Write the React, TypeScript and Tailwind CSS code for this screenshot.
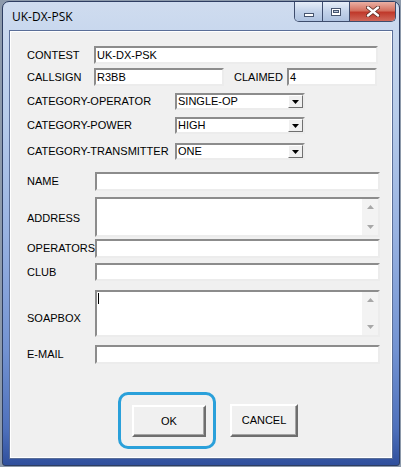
import React from "react";

// sunken classic edit box
const Edit = ({ className, value, cursor, scroll }: { className: string; value?: string; cursor?: boolean; scroll?: boolean }) => (
  <div className={`relative flex bg-white border-2 border-t-[#8c8c8c] border-l-[#8c8c8c] border-r-[#ececec] border-b-[#ececec] ${className}`}>
    <div className="flex-1 pl-[1px] leading-[14px] text-[11px] text-black">
      {value}
      {cursor && <div className="w-[1px] h-[11px] bg-black mt-[1px]" />}
    </div>
    {scroll && (
      <div className="w-[16px] flex flex-col justify-between items-center bg-[#f3f3f3] py-[6px]">
        <svg width="7" height="4" viewBox="0 0 7 4"><path d="M0 4 L3.5 0 L7 4 Z" fill="#a8a8a8" /></svg>
        <svg width="7" height="4" viewBox="0 0 7 4"><path d="M0 0 L3.5 4 L7 0 Z" fill="#a8a8a8" /></svg>
      </div>
    )}
  </div>
);

const Combo = ({ value }: { value: string }) => (
  <div className="flex items-center bg-white w-[130px] h-[17px] border-2 border-t-[#8c8c8c] border-l-[#8c8c8c] border-r-[#ececec] border-b-[#ececec]">
    <div className="flex-1 pl-[1px] text-[11px] leading-[13px]">{value}</div>
    <div className="w-[15px] h-[13px] flex items-center justify-center bg-[#f0f0f0] border border-t-white border-l-white border-r-[#707070] border-b-[#707070]">
      <svg width="7" height="4" viewBox="0 0 7 4"><path d="M0 0 L3.5 4 L7 0 Z" fill="#000" /></svg>
    </div>
  </div>
);

const Label = ({ className, children }: { className: string; children: React.ReactNode }) => (
  <div className={`shrink-0 text-[11px] text-black whitespace-nowrap ${className}`}>{children}</div>
);

const Button = ({ className, children }: { className: string; children: React.ReactNode }) => (
  <div className={`flex items-center justify-center bg-[#f0f0f0] text-[11px] border-2 border-t-white border-l-white border-r-[#6e6e6e] border-b-[#6e6e6e] shadow-[inset_-1px_-1px_0_#a5a5a5] ${className}`}>
    {children}
  </div>
);

export default function App() {
  return (
    <div className="w-[401px] h-[467px] bg-[#8d9aab] pt-[1px] pl-[2px] pr-[1px] font-['Liberation_Sans',Arial,sans-serif] overflow-hidden">
      <div className="w-[398px] h-[465px] flex flex-col rounded-t-[7px] rounded-b-[3px] border border-[#2e3e62] bg-[linear-gradient(180deg,#cfdcef_0%,#b6cbea_25%,#98b2e1_50%,#7393d2_75%,#4f71bc_92%,#2f4f9c_100%)]">
        {/* title bar */}
        <div className="h-[28px] flex justify-between shrink-0">
          <div className="pl-[9px] pt-[8px] text-[12px] text-black font-['Open_Sans',sans-serif] leading-[14px]">UK-DX-PSK</div>
          <div className="flex h-[20px] mr-[3px] border border-t-0 border-[#3e4d6d] rounded-b-[5px] overflow-hidden">
            <div className="w-[28px] flex items-center justify-center bg-[linear-gradient(180deg,#e6eef8,#c3d3ea_50%,#aec2e0)] border-r border-[#3e4d6d]">
              <div className="w-[10px] h-[4px] bg-white border border-[#46556f] mt-[6px]" />
            </div>
            <div className="w-[27px] flex items-center justify-center bg-[linear-gradient(180deg,#e6eef8,#c3d3ea_50%,#aec2e0)] border-r border-[#3e4d6d]">
              <div className="w-[10px] h-[8px] border border-[#46556f] bg-white flex items-center justify-center">
                <div className="w-[6px] h-[3px] border border-[#46556f] bg-[#b9c7dc]" />
              </div>
            </div>
            <div className="w-[45px] flex items-center justify-center bg-[linear-gradient(180deg,#eab0a4,#d4705f_45%,#c0392b_55%,#d0685a)]">
              <svg width="14" height="11" viewBox="0 0 14 11">
                <path d="M2 1.5 L12 9.5 M12 1.5 L2 9.5" stroke="#5a2a22" strokeWidth="4" strokeLinecap="round" />
                <path d="M2 1.5 L12 9.5 M12 1.5 L2 9.5" stroke="#fff" strokeWidth="2.4" strokeLinecap="round" />
              </svg>
            </div>
          </div>
        </div>

        {/* client */}
        <div className="mx-[6px] mb-[6px] h-[429px] bg-[#f0f0f0] border border-[#5a6e98] shadow-[inset_0_0_0_1px_#ffffff] pl-[17px] pt-[15px] flex flex-col">
          <div className="flex items-center h-[18px]">
            <Label className="w-[67px]">CONTEST</Label>
            <Edit className="w-[284px] h-[18px]" value="UK-DX-PSK" />
          </div>
          <div className="flex items-center h-[18px] mt-[4px]">
            <Label className="w-[67px]">CALLSIGN</Label>
            <Edit className="w-[130px] h-[18px]" value="R3BB" />
            <Label className="w-[63px] pl-[10px]">CLAIMED</Label>
            <Edit className="w-[90px] h-[18px]" value="4" />
          </div>
          <div className="flex items-center h-[17px] mt-[7px]">
            <Label className="w-[148px]">CATEGORY-OPERATOR</Label>
            <Combo value="SINGLE-OP" />
          </div>
          <div className="flex items-center h-[17px] mt-[7px]">
            <Label className="w-[148px]">CATEGORY-POWER</Label>
            <Combo value="HIGH" />
          </div>
          <div className="flex items-center h-[17px] mt-[9px]">
            <Label className="w-[148px]">CATEGORY-TRANSMITTER</Label>
            <Combo value="ONE" />
          </div>
          <div className="flex items-center h-[19px] mt-[12px]">
            <Label className="w-[68px]">NAME</Label>
            <Edit className="w-[285px] h-[19px]" />
          </div>
          <div className="flex items-center h-[40px] mt-[6px]">
            <Label className="w-[68px] pt-[3px]">ADDRESS</Label>
            <Edit className="w-[285px] h-[40px]" scroll />
          </div>
          <div className="flex items-center h-[19px] mt-[2px]">
            <Label className="w-[68px]">OPERATORS</Label>
            <Edit className="w-[285px] h-[19px]" />
          </div>
          <div className="flex items-center h-[18px] mt-[5px]">
            <Label className="w-[68px]">CLUB</Label>
            <Edit className="w-[285px] h-[18px]" />
          </div>
          <div className="flex items-center h-[47px] mt-[9px]">
            <Label className="w-[68px] pt-[10px]">SOAPBOX</Label>
            <Edit className="w-[285px] h-[47px]" cursor scroll />
          </div>
          <div className="flex items-center h-[19px] mt-[8px]">
            <Label className="w-[68px]">E-MAIL</Label>
            <Edit className="w-[285px] h-[19px]" />
          </div>
          <div className="flex items-center mt-[28px] pl-[91px]">
            <div className="border-[3px] border-[#2aa0da] rounded-[10px] pl-[11px] pr-[7px] pt-[10px] pb-[9px]">
              <Button className="w-[74px] h-[32px]">OK</Button>
            </div>
            <Button className="w-[68px] h-[33px] ml-[14px]">CANCEL</Button>
          </div>
        </div>
      </div>
    </div>
  );
}
